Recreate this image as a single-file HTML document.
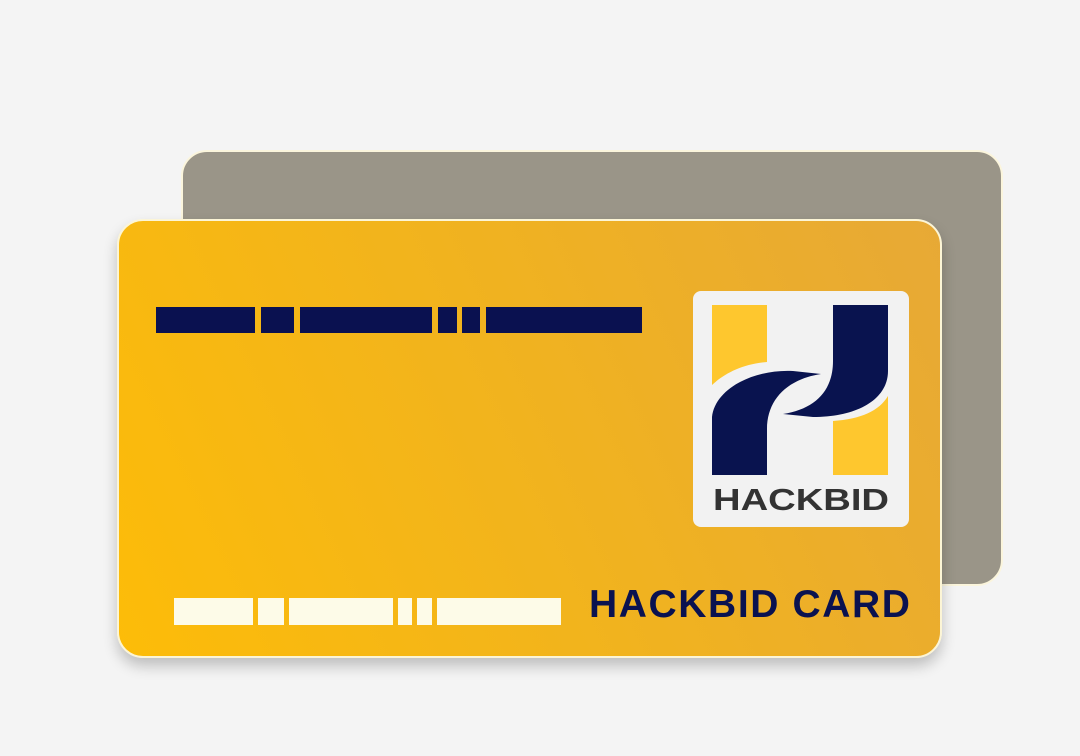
<!DOCTYPE html>
<html><head><meta charset="utf-8"><style>
html,body{margin:0;padding:0;}
body{width:1080px;height:756px;background:#f4f4f4;position:relative;overflow:hidden;font-family:"Liberation Sans",sans-serif;}
.back{position:absolute;left:181px;top:150px;width:818px;height:432px;background:#9a9588;border:2px solid #fbf5dc;border-radius:26px;}
.front{position:absolute;left:117px;top:219px;width:821px;height:435px;border:2px solid #fcf5d6;border-radius:26px;background:linear-gradient(65deg,#fdbc08 0%,#f2b41c 45%,#e7a936 100%);box-shadow:0 8px 14px rgba(0,0,0,0.22);}
.b{position:absolute;height:26px;}
.n{background:#0a1150;top:307px;}
.c{background:#fdfbe8;top:598px;height:27px;}
.title{position:absolute;left:589px;top:583px;font-size:39px;font-weight:bold;color:#0a1250;letter-spacing:1.6px;white-space:nowrap;}
.logo{position:absolute;left:693px;top:291px;}
</style></head><body>
<div class="back"></div>
<div class="front"></div>
<div class="b n" style="left:156px;width:99px"></div>
<div class="b n" style="left:261px;width:33px"></div>
<div class="b n" style="left:300px;width:132px"></div>
<div class="b n" style="left:438px;width:19px"></div>
<div class="b n" style="left:462px;width:18px"></div>
<div class="b n" style="left:486px;width:156px"></div>
<div class="b c" style="left:174px;width:79px"></div>
<div class="b c" style="left:258px;width:26px"></div>
<div class="b c" style="left:289px;width:104px"></div>
<div class="b c" style="left:398px;width:14px"></div>
<div class="b c" style="left:417px;width:15px"></div>
<div class="b c" style="left:437px;width:124px"></div>
<div class="title">HACKBID CARD</div>
<svg class="logo" width="216" height="236" viewBox="0 0 216 236">
<rect x="0" y="0" width="216" height="236" rx="8" fill="#f2f2f2"/>
<path d="M19,14 L74,14 L74,71 C50,73 32,82 19,94 Z" fill="#fec72e"/>
<path d="M19,184 L19,126 C22,98 60,78 100,80 L128,83 C95,88 74,108 74,138 L74,184 Z" fill="#09134f"/>
<path d="M140,14 L195,14 L195,80 C195,108 165,126 120,126 L90,123 C122,118 140,100 140,70 Z" fill="#09134f"/>
<path d="M140,184 L140,130 C168,128 186,120 195,105 L195,184 Z" fill="#fec72e"/>
<text x="20" y="219" font-family="Liberation Sans,sans-serif" font-weight="bold" font-size="31" fill="#333" textLength="176" lengthAdjust="spacingAndGlyphs">HACKBID</text>
</svg>
</body></html>
